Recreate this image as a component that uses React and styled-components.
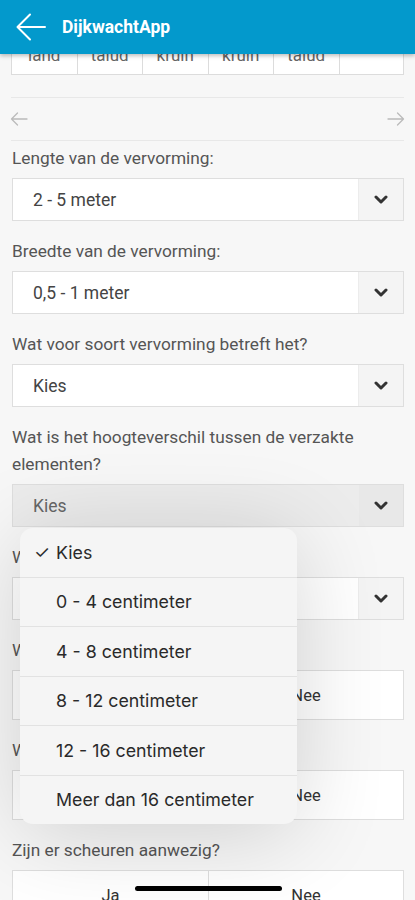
import React from 'react';
import styled, { createGlobalStyle } from 'styled-components';

const GlobalStyle = createGlobalStyle`
  body {
    margin: 0;
    background: #f7f7f7;
    font-family: Roboto, "Liberation Sans", Arial, sans-serif;
  }
`;

const Page = styled.div`
  position: relative;
  width: 415px;
  height: 900px;
  overflow: hidden;
  background: #f7f7f7;
`;

const Header = styled.header`
  position: relative;
  z-index: 2;
  height: 54px;
  background: #0399cc;
  display: flex;
  align-items: center;
  padding-left: 16px;
  gap: 16px;
  box-shadow: 0 2px 4px rgba(0, 0, 0, 0.25);
`;

const Title = styled.h1`
  margin: 0;
  color: #fff;
  font-size: 17.5px;
  font-weight: 700;
`;

const CellRow = styled.div`
  display: grid;
  grid-template-columns: repeat(6, 1fr);
  margin: 0 11px;
  border-bottom: 1px solid #dcdcdc;
  background: #fff;
`;

const Cell = styled.div`
  height: 20px;
  overflow: hidden;
  border-left: 1px solid #dcdcdc;
  &:last-child {
    border-right: 1px solid #dcdcdc;
  }
  span {
    display: block;
    margin-top: -11px;
    line-height: 24px;
    text-align: center;
    font-size: 17px;
    color: #666;
  }
`;

const Divider = styled.div`
  height: 1px;
  margin: ${(p) => p.top || 0}px 11px 0;
  background: #e8e8e8;
`;

const Nav = styled.div`
  height: 42px;
  display: flex;
  align-items: center;
  justify-content: space-between;
  padding: 0 10px;
`;

const Form = styled.div`
  padding: 4px 11px 0 12px;
  display: flex;
  flex-direction: column;
`;

const Field = styled.div`
  margin-bottom: 17px;
`;

const Label = styled.div`
  font-size: 17.3px;
  line-height: 27px;
  color: #555;
  margin-bottom: 6px;
`;

const Select = styled.div`
  height: 43px;
  box-sizing: border-box;
  display: flex;
  border: 1px solid #dedede;
  background: ${(p) => (p.dim ? '#ececec' : '#fff')};
`;

const SelectValue = styled.div`
  flex: 1;
  display: flex;
  align-items: center;
  padding-left: 20px;
  font-size: 17.5px;
  color: ${(p) => (p.dim ? '#666' : '#444')};
`;

const SelectButton = styled.div`
  width: 44px;
  display: flex;
  align-items: center;
  justify-content: center;
  background: ${(p) => (p.dim ? '#e8e8e8' : '#f4f4f4')};
  border-left: 1px solid #ececec;
`;

const Toggle = styled.div`
  height: 50px;
  box-sizing: border-box;
  display: grid;
  grid-template-columns: 1fr 1fr;
  border: 1px solid #dedede;
  background: #fff;
`;

const ToggleOption = styled.div`
  display: flex;
  align-items: center;
  justify-content: center;
  font-size: 16.5px;
  color: #333;
  & + & {
    border-left: 1px solid #dedede;
  }
`;

const Menu = styled.ul`
  position: absolute;
  left: 20px;
  top: 528px;
  width: 277px;
  margin: 0;
  padding: 0;
  list-style: none;
  background: #f5f5f5;
  border-radius: 13px;
  overflow: hidden;
  box-shadow: 0 10px 90px rgba(0, 0, 0, 0.16);
  font-family: Inter, "Liberation Sans", Arial, sans-serif;
  z-index: 3;
`;

const MenuItem = styled.li`
  height: 48.5px;
  display: flex;
  align-items: center;
  padding-left: 36px;
  font-size: 17.8px;
  color: #2a2a2a;
  & + & {
    border-top: 1px solid #e2e2e2;
  }
`;

const Check = styled.span`
  width: 22px;
  margin-left: -22px;
  font-size: 18px;
`;

const HomeBar = styled.div`
  position: absolute;
  left: 135px;
  bottom: 9px;
  width: 147px;
  height: 5px;
  border-radius: 3px;
  background: #000;
  z-index: 4;
`;

const Chevron = () => (
  <svg width="14" height="9" viewBox="0 0 14 9">
    <polyline points="2,2 7,7 12,2" fill="none" stroke="#333" strokeWidth="3" strokeLinecap="round" strokeLinejoin="round" />
  </svg>
);

const Arrow = ({ dir = 'left' }) => (
  <svg width="18" height="14" viewBox="0 0 18 14" style={{ transform: dir === 'right' ? 'scaleX(-1)' : 'none' }}>
    <path d="M17 7H1.5M7.5 1L1.5 7l6 6" fill="none" stroke="#bbb" strokeWidth="1.3" strokeLinecap="round" strokeLinejoin="round" />
  </svg>
);

const DropdownField = ({ label, value, dim }) => (
  <Field>
    <Label>{label}</Label>
    <Select dim={dim}>
      <SelectValue dim={dim}>{value}</SelectValue>
      <SelectButton dim={dim}>
        <Chevron />
      </SelectButton>
    </Select>
  </Field>
);

const YesNoField = ({ label }) => (
  <Field>
    <Label>{label}</Label>
    <Toggle>
      <ToggleOption>Ja</ToggleOption>
      <ToggleOption>Nee</ToggleOption>
    </Toggle>
  </Field>
);

const options = [
  '0 - 4 centimeter',
  '4 - 8 centimeter',
  '8 - 12 centimeter',
  '12 - 16 centimeter',
  'Meer dan 16 centimeter',
];

export default function App() {
  return (
    <Page>
      <GlobalStyle />
      <Header>
        <svg width="30" height="28" viewBox="0 0 30 28">
          <path d="M29 14H2M14 1.5L1.5 14 14 26.5" fill="none" stroke="#fff" strokeWidth="2" strokeLinecap="round" strokeLinejoin="round" />
        </svg>
        <Title>DijkwachtApp</Title>
      </Header>

      <CellRow>
        {['land', 'talud', 'kruin', 'kruin', 'talud', ''].map((t, i) => (
          <Cell key={i}>
            <span>{t}</span>
          </Cell>
        ))}
      </CellRow>

      <Divider top={22} />
      <Nav>
        <Arrow dir="left" />
        <Arrow dir="right" />
      </Nav>
      <Divider />

      <Form>
        <DropdownField label="Lengte van de vervorming:" value="2 - 5 meter" />
        <DropdownField label="Breedte van de vervorming:" value="0,5 - 1 meter" />
        <DropdownField label="Wat voor soort vervorming betreft het?" value="Kies" />
        <DropdownField
          label="Wat is het hoogteverschil tussen de verzakte elementen?"
          value="Kies"
          dim
        />
        <DropdownField label="Wat is de oorzaak?" value="Kies" />
        <YesNoField label="Wordt er water gezien?" />
        <YesNoField label="Wordt er zand gezien?" />
        <YesNoField label="Zijn er scheuren aanwezig?" />
      </Form>

      <Menu>
        <MenuItem>
          <Check>✓</Check>Kies
        </MenuItem>
        {options.map((o) => (
          <MenuItem key={o}>{o}</MenuItem>
        ))}
      </Menu>

      <HomeBar />
    </Page>
  );
}
